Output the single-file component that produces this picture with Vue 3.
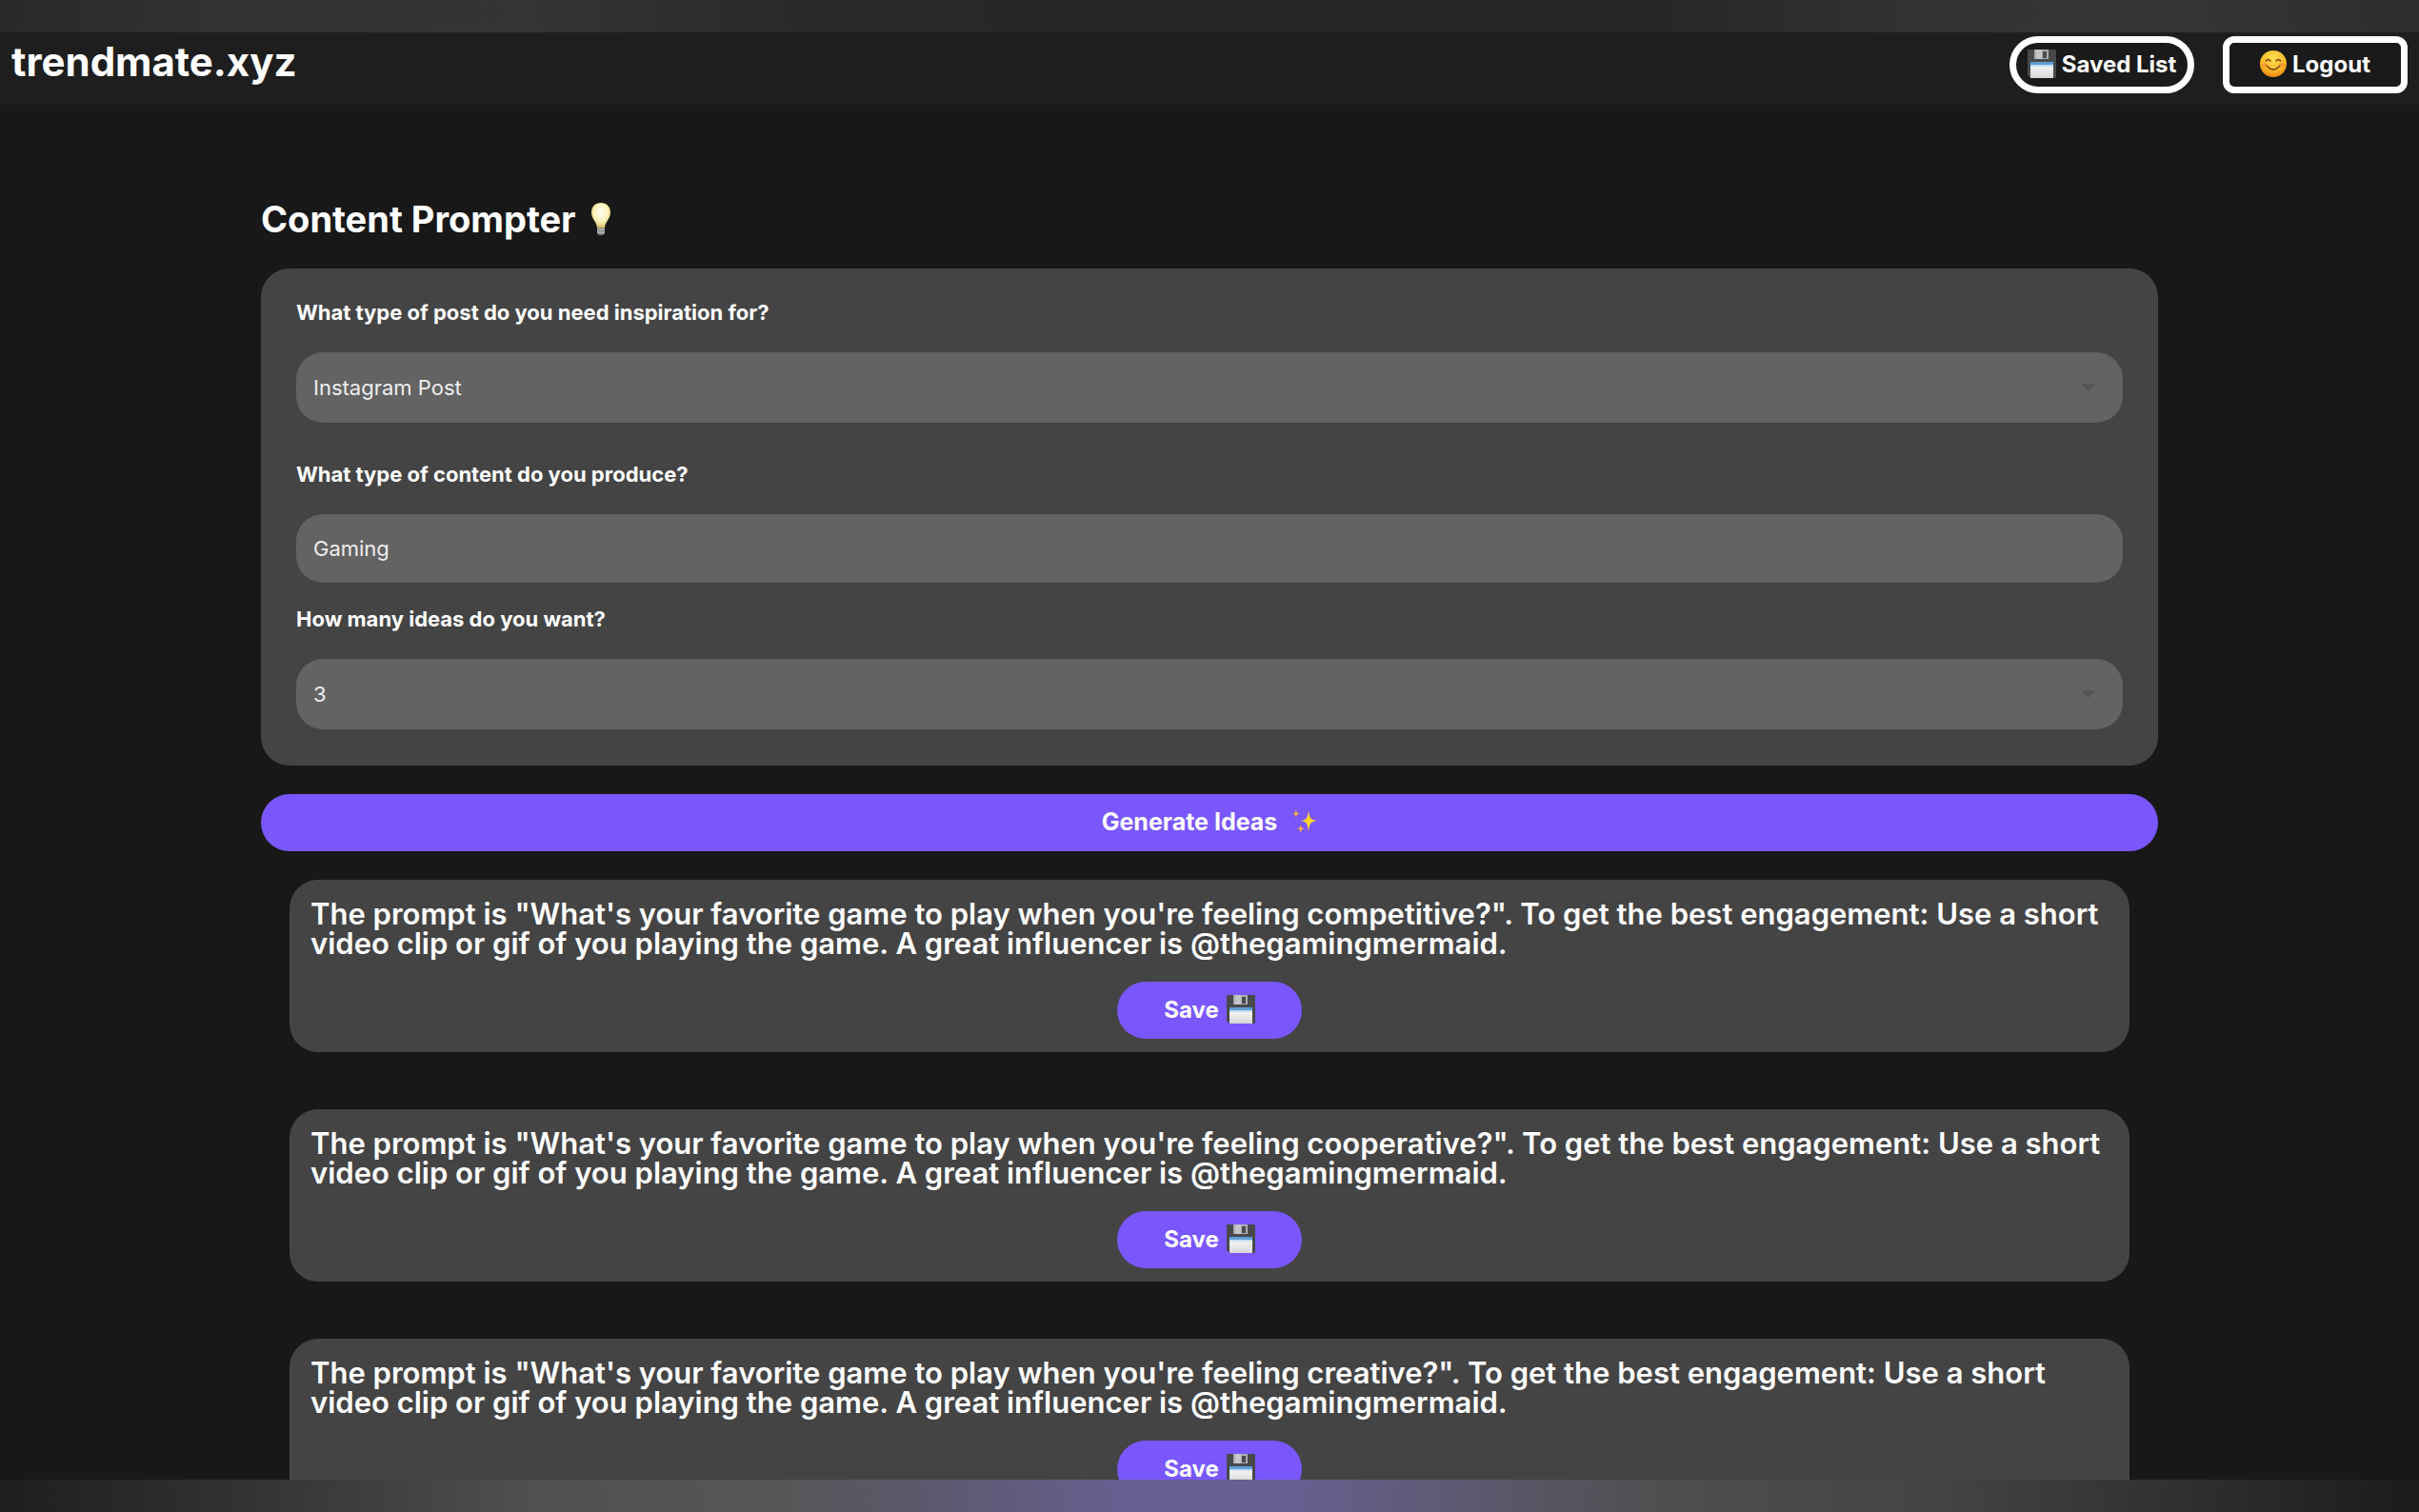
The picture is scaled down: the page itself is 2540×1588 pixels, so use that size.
<script setup>
import { ref } from 'vue'

const postType = ref('Instagram Post')
const contentType = ref('Gaming')
const ideaCount = ref('3')
const moods = ['competitive', 'cooperative', 'creative']
</script>

<template>
  <svg class="sprite" aria-hidden="true">
    <defs>
      <linearGradient id="label-fill" x1="0" y1="0" x2="0" y2="1">
        <stop offset="0" stop-color="#ffffff" />
        <stop offset="1" stop-color="#d6d6d6" />
      </linearGradient>
      <radialGradient id="face-fill" cx="0.5" cy="0.3" r="0.75">
        <stop offset="0" stop-color="#ffe04e" />
        <stop offset="0.6" stop-color="#fbb92b" />
        <stop offset="1" stop-color="#e87f10" />
      </radialGradient>
      <radialGradient id="bulb-fill" cx="0.5" cy="0.4" r="0.6">
        <stop offset="0" stop-color="#fffef2" />
        <stop offset="0.6" stop-color="#fdf3bd" />
        <stop offset="1" stop-color="#d9bd62" />
      </radialGradient>
      <symbol id="floppy" viewBox="0 0 30 30">
        <path d="M1 0h28q1 0 1 1v28q0 1-1 1H3l-3-3V1q0-1 1-1z" fill="#48494b" />
        <path d="M7 0h15v10H7z" fill="#a9abae" />
        <path d="M9 0h6v10H9z" fill="#c3c5c7" />
        <path d="M16 2h4v7h-4z" fill="#4a4b4d" />
        <path d="M3 13h24v17H3z" fill="url(#label-fill)" />
        <path d="M3 13h24v4H3z" fill="#5f9fd6" />
        <path d="M3 16h24v2H3z" fill="#c5def2" />
      </symbol>
      <symbol id="smile" viewBox="0 0 28 28">
        <circle cx="14" cy="14" r="14" fill="url(#face-fill)" />
        <path d="M6.500 11q2-3 4.500 0M17 11q2.500-3 4.500 0M7 16q7 8 14 0" fill="none" stroke="#7a4310" stroke-width="1.600" stroke-linecap="round" />
        <ellipse cx="5" cy="15" rx="3" ry="2" fill="#f7803a" opacity="0.500" />
        <ellipse cx="23" cy="15" rx="3" ry="2" fill="#f7803a" opacity="0.500" />
      </symbol>
      <symbol id="bulb" viewBox="0 0 20 34">
        <path d="M10 0C4 0 0 4 0 10c0 7 5 9 6 16h8c1-7 6-9 6-16 0-6-4-10-10-10z" fill="url(#bulb-fill)" />
        <path d="M6 26h8v5q0 3-4 3t-4-3z" fill="#8b8b86" />
        <path d="M6 28h8M6 31h8" stroke="#c9c9c4" stroke-width="1" />
      </symbol>
      <symbol id="sparkles" viewBox="0 0 26 26">
        <path d="M17 1c1 8 2 10 9 11-7 1-8 3-9 12-1-9-2-11-8-12 6-1 7-3 8-11z" fill="#ffd22e" />
        <path d="M4 0c0 3 1 4 4 5-3 0-4 1-4 4-1-3-1-4-4-4 3-1 3-2 4-5zM9 16c0 3 1 4 4 4-3 1-4 2-4 5-1-3-1-4-4-5 3 0 3-1 4-4z" fill="#f4ae3d" />
      </symbol>
    </defs>
  </svg>

  <div class="page">
    <div class="strip strip-top"></div>

    <header class="nav">
      <a class="brand" href="#">trendmate.xyz</a>
      <nav class="actions">
        <button class="outline pill" type="button">
          <svg class="floppy"><use href="#floppy" /></svg>Saved List
        </button>
        <button class="outline" type="button">
          <svg class="smile"><use href="#smile" /></svg>Logout
        </button>
      </nav>
    </header>

    <main class="content">
      <h1 class="title">Content Prompter<svg class="bulb"><use href="#bulb" /></svg></h1>

      <form class="form" @submit.prevent>
        <div class="panel">
          <div class="field spaced">
            <label for="post-type">What type of post do you need inspiration for?</label>
            <div class="select-box">
              <select id="post-type" v-model="postType" class="control">
                <option>Instagram Post</option>
              </select>
              <svg class="caret" viewBox="0 0 16 8"><path d="M0 0h16L8 8z" /></svg>
            </div>
          </div>
          <div class="field">
            <label for="content-type">What type of content do you produce?</label>
            <input id="content-type" v-model="contentType" class="control text" type="text" />
          </div>
          <div class="field">
            <label for="idea-count">How many ideas do you want?</label>
            <div class="select-box">
              <select id="idea-count" v-model="ideaCount" class="control">
                <option>3</option>
              </select>
              <svg class="caret" viewBox="0 0 16 8"><path d="M0 0h16L8 8z" /></svg>
            </div>
          </div>
        </div>
        <button class="solid generate" type="submit">
          Generate Ideas<svg class="sparkles"><use href="#sparkles" /></svg>
        </button>
      </form>

      <section class="ideas">
        <article v-for="mood in moods" :key="mood" class="idea">
          <p>The prompt is "What's your favorite game to play when you're feeling {{ mood }}?". To get the best engagement: Use a short video clip or gif of you playing the game. A great influencer is @thegamingmermaid.</p>
          <button class="solid save" type="button">
            Save<svg class="floppy"><use href="#floppy" /></svg>
          </button>
        </article>
      </section>
    </main>

    <div class="strip strip-bottom"></div>
  </div>
</template>

<style>
body {
  margin: 0;
  background: #181818;
}
</style>

<style scoped>
.page {
  display: flex;
  flex-direction: column;
  height: 100vh;
  color: #fff;
  background: #181818;
  font-family: Inter, "Liberation Sans", sans-serif;
}
.page * {
  box-sizing: border-box;
}
.sprite {
  position: absolute;
  width: 0;
  height: 0;
}
.strip {
  flex: none;
  height: 34px;
}
.strip-top {
  background: linear-gradient(90deg, #292929, #333 10%, #343434 22%, #2a2a2a 32%, #262626 45%, #262626 68%, #333 80%, #353535 90%, #2d2d2b);
}
.strip-bottom {
  background: linear-gradient(90deg, #1e1e1e, #323232 10%, #505050 22%, #565656 32%, #5c586c 38%, #675f92 47%, #675f92 53%, #5b576a 62%, #4e4e4e 69%, #444 80%, #303030 90%, #1b1b1b);
}
.nav {
  display: flex;
  flex: none;
  align-items: flex-start;
  justify-content: space-between;
  height: 76px;
  padding: 4px 12px;
  background: #1e1e1e;
}
.brand {
  color: #fff;
  font-size: 42px;
  font-weight: 700;
  line-height: 54px;
  text-decoration: none;
}
.actions {
  display: flex;
  gap: 30px;
}
button {
  display: flex;
  align-items: center;
  justify-content: center;
  height: 60px;
  padding: 0 0 2px;
  border: 0;
  color: #fff;
  font-family: inherit;
  font-size: 24px;
  font-weight: 700;
  white-space: nowrap;
}
.outline {
  gap: 6px;
  width: 194px;
  border: 7px solid #fff;
  border-radius: 12px;
  background: #1a1a1a;
}
.pill {
  border-radius: 30px;
}
.floppy {
  width: 30px;
  height: 30px;
}
.smile {
  width: 28px;
  height: 28px;
}
.content {
  flex: 1;
  min-height: 0;
  padding: 96px 274px 0;
  overflow: hidden;
}
.title {
  display: flex;
  align-items: center;
  gap: 16px;
  margin: 0 0 28px;
  font-size: 38px;
  font-weight: 700;
  line-height: 48px;
}
.bulb {
  width: 20px;
  height: 34px;
}
.panel {
  display: flex;
  flex-direction: column;
  gap: 22px;
  padding: 30px 37px 38px;
  border-radius: 30px;
  background: #444;
}
.spaced {
  margin-bottom: 16px;
}
.field {
  display: flex;
  flex-direction: column;
  gap: 26px;
}
label {
  font-size: 22px;
  font-weight: 700;
  line-height: 32px;
}
.select-box {
  position: relative;
}
.control {
  display: block;
  width: 100%;
  height: 74px;
  padding: 0 18px;
  border: 0;
  border-radius: 28px;
  outline: 0;
  appearance: none;
  color: #eee;
  background: #636363;
  font-family: inherit;
  font-size: 22px;
}
.text {
  height: 72px;
}
.caret {
  position: absolute;
  top: 33px;
  right: 28px;
  width: 16px;
  height: 8px;
  fill: #555;
  pointer-events: none;
}
.solid {
  gap: 16px;
  width: 100%;
  border-radius: 30px;
  background: #7957fc;
}
.generate {
  font-size: 25px;
}
.form {
  display: flex;
  flex-direction: column;
  gap: 30px;
}
.sparkles {
  width: 26px;
  height: 26px;
}
.ideas {
  display: flex;
  flex-direction: column;
  gap: 60px;
  padding: 30px;
}
.idea {
  display: flex;
  flex-direction: column;
  align-items: center;
  padding: 20px 10px 14px 22px;
  border-radius: 30px;
  background: #444;
}
.idea p {
  width: 100%;
  margin: 0 0 25px;
  font-size: 31px;
  font-weight: 600;
  line-height: 31px;
}
.idea .save {
  gap: 8px;
  width: 194px;
  margin-right: 12px;
}
</style>
